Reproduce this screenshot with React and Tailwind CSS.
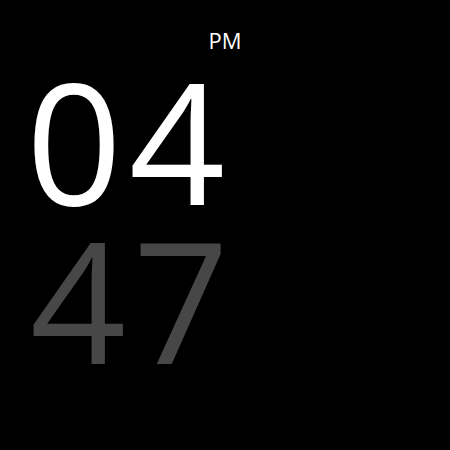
import React from 'react';

export default function App() {
  return (
    <div className="w-[450px] h-[450px] bg-black overflow-hidden font-['Open_Sans',sans-serif] flex flex-col">
      <div className="pt-[26px] text-center text-white text-[22px] leading-[28px]">PM</div>
      <div className="mt-[6px] pl-[26px] flex flex-col">
        <span className="text-white text-[168px] leading-[159px] tracking-[7px]">04</span>
        <span className="text-[#474747] text-[168px] leading-[159px] tracking-[7px] pl-[4px]">47</span>
      </div>
    </div>
  );
}
